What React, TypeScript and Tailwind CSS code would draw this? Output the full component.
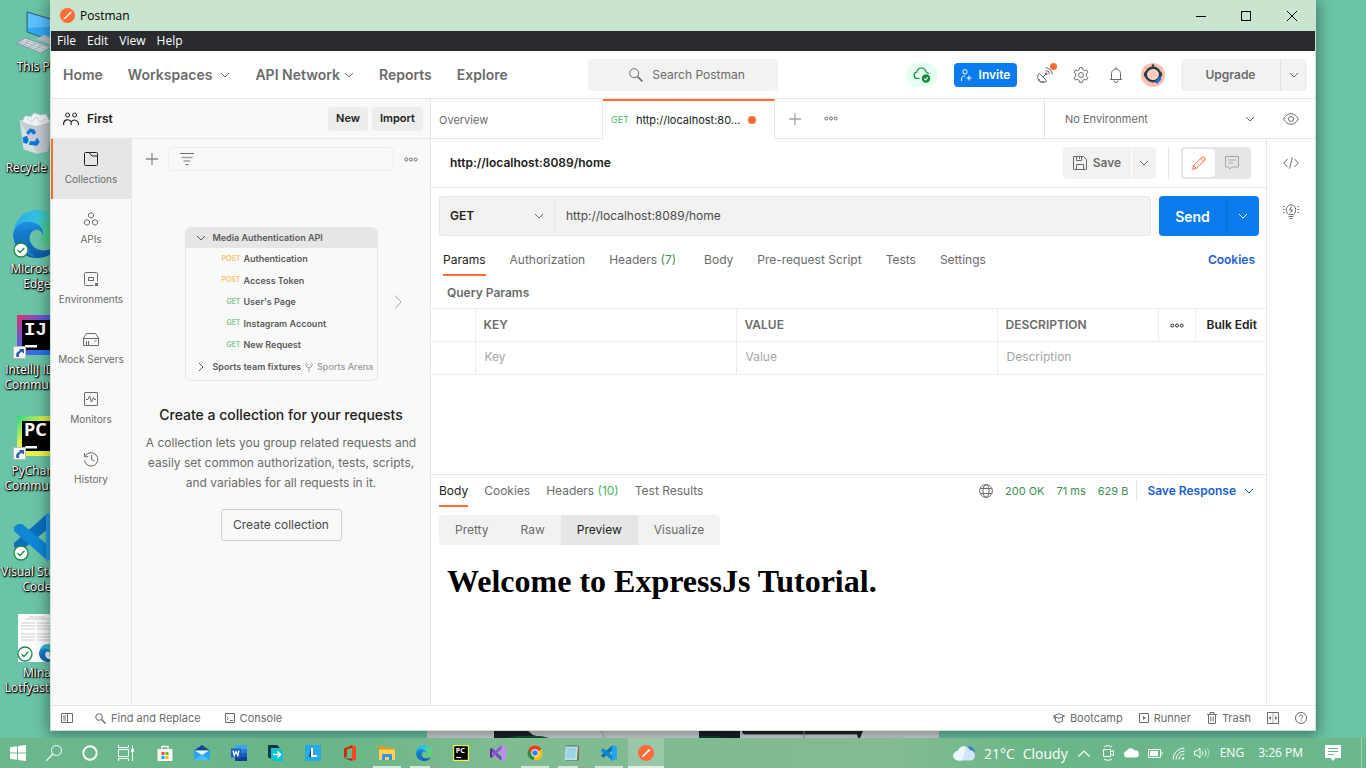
import React from "react";

type P = { className?: string };

/* ---------- line icons ---------- */

function Svg({
  w,
  h,
  className = "",
  children,
}: {
  w: number;
  h: number;
  className?: string;
  children: React.ReactNode;
}) {
  return (
    <svg
      width={w}
      height={h}
      viewBox={`0 0 ${w} ${h}`}
      fill="none"
      stroke="currentColor"
      className={`shrink-0 ${className}`}
      aria-hidden="true"
    >
      {children}
    </svg>
  );
}

const Chevron = ({ className }: P) => (
  <Svg w={10} h={6} className={className}>
    <path d="M1 1l4 4 4-4" />
  </Svg>
);
const Dots = ({ className }: P) => (
  <Svg w={14} h={5} className={className}>
    <circle cx="2.3" cy="2.5" r="1.5" />
    <circle cx="7" cy="2.5" r="1.5" />
    <circle cx="11.7" cy="2.5" r="1.5" />
  </Svg>
);
const Plus = ({ className }: P) => (
  <Svg w={12} h={12} className={className}>
    <path d="M6 0v12M0 6h12" strokeWidth="1.3" />
  </Svg>
);
const SearchIcon = ({ className }: P) => (
  <Svg w={14} h={14} className={className}>
    <circle cx="5.2" cy="5.2" r="4.5" />
    <path d="M8.4 8.4l5 5" strokeWidth="1.6" />
  </Svg>
);
const SmallSearch = ({ className }: P) => (
  <Svg w={11} h={11} className={className}>
    <circle cx="4" cy="4" r="3.3" />
    <path d="M6.5 6.5l4 4" strokeWidth="1.5" />
  </Svg>
);

function PostmanLogo({ size }: { size: number }) {
  return (
    <svg width={size} height={size} viewBox="0 0 16 16" className="shrink-0" aria-hidden="true">
      <circle cx="8" cy="8" r="8" fill="#ff6c37" />
      <path d="M3.4 12.600l1.600-2.600 4.600-4.300 1 1-4.400 4.500z" fill="#fff" />
      <path d="M9.300 5.600l1.900-1.800 1.300 1.300-1.800 1.900z" fill="#fff" />
    </svg>
  );
}

const People = () => (
  <Svg w={16} h={13}>
    <circle cx="4.6" cy="3" r="2" />
    <circle cx="11.6" cy="3" r="2" />
    <path d="M.6 13v-1.200a4 4 0 0 1 7.600-1.800M15.500 13v-1.200a4 4 0 0 0-7.400-1.800M8.100 10v3" strokeWidth="1.1" />
  </Svg>
);
const Filter = () => (
  <Svg w={14} h={12}>
    <path d="M0 .5h14M5.500 11.500h3" />
    <path d="M1.500 4.500h11M3.500 8h7" strokeWidth="1.600" opacity=".6" />
  </Svg>
);

const CollectionsIcon = () => (
  <Svg w={14} h={14}>
    <path d="M1.500.5h11a1 1 0 0 1 1 1v11a1 1 0 0 1-1 1h-11a1 1 0 0 1-1-1v-11a1 1 0 0 1 1-1zM5 .5l3 3.500h5.500" />
  </Svg>
);
const ApisIcon = () => (
  <Svg w={16} h={14}>
    <path d="M8 .6l2.500 1.400v2.700L8 6.100 5.500 4.700V2zM4 7.600l2.500 1.400v2.700L4 13.200l-2.600-1.500V9zM12 7.600l2.500 1.400v2.700L12 13.200l-2.600-1.500V9z" />
  </Svg>
);
const EnvIcon = () => (
  <Svg w={14} h={14}>
    <path d="M9.500 13.500h-8a1 1 0 0 1-1-1v-11a1 1 0 0 1 1-1h11a1 1 0 0 1 1 1v8" />
    <rect x="4.500" y="5.500" width="5" height="3" />
    <rect x="11" y="11" width="3" height="3" fill="currentColor" stroke="none" />
  </Svg>
);
const MockIcon = () => (
  <Svg w={16} h={13}>
    <path d="M.5 12.500v-7.500L3.500.5h9l3 4.500v7.500zM.5 5.500h15M3.500 8v4.500M5.500 8v4.500M11.500 8h2" />
  </Svg>
);
const MonitorIcon = () => (
  <Svg w={14} h={14}>
    <rect x=".5" y=".5" width="13" height="13" rx=".5" />
    <path d="M2 7.500h2L5.500 4l2 6 2-4.500 1 2H12" />
  </Svg>
);
const HistoryIcon = () => (
  <Svg w={16} h={16}>
    <path d="M2.200 5.200A6.700 6.700 0 1 1 1.500 9.500M1.500 2v3.700H5.200M8.500 4v4.500l3 1.500" />
  </Svg>
);

const CloudOk = () => (
  <Svg w={18} h={16} className="text-[#0f8a3c]">
    <path d="M6.500 11.500H4a3.300 3.300 0 0 1-.3-6.500A4.700 4.700 0 0 1 13 5a3 3 0 0 1 2.500 2" strokeWidth="1.200" />
    <circle cx="13" cy="11.500" r="4.200" fill="#0f8a3c" stroke="none" />
    <path d="M11.200 11.600l1.300 1.300 2.300-2.500" stroke="#fff" strokeWidth="1.100" />
  </Svg>
);
const InviteIcon = () => (
  <Svg w={11} h={12}>
    <circle cx="4" cy="2.800" r="2.200" />
    <path d="M.6 12V9.800C.6 8 2 6.900 4 6.900M8 6.500v5M5.500 9H10.500" />
  </Svg>
);
const Satellite = () => (
  <Svg w={16} h={16}>
    <path d="M2.200 6.200a5.200 5.200 0 0 0 7.600 7.600zM6 10l3-3M1 13.500l2-1.200M2.500 15l5-.2" />
    <circle cx="9.200" cy="6.800" r=".9" fill="currentColor" />
    <path d="M8.500 3.500a4 4 0 0 1 4 4M8.500.8a6.600 6.600 0 0 1 6.700 6.700" />
  </Svg>
);
const Gear = () => (
  <Svg w={16} h={16}>
    <path d="M6.600.7h2.800l.5 2.100 1.500.9 2.100-.7 1.400 2.400-1.600 1.500v2.200l1.600 1.500-1.400 2.400-2.100-.7-1.500.9-.5 2.100H6.600l-.5-2.100-1.500-.9-2.100.7-1.400-2.400 1.600-1.500V6.900L1.100 5.400 2.500 3l2.100.7 1.500-.9z" strokeLinejoin="round" />
    <circle cx="8" cy="8" r="2.500" />
  </Svg>
);
const Bell = () => (
  <Svg w={14} h={16}>
    <path d="M1 12.500h12M2.500 12.500V6.500a4.500 4.500 0 0 1 9 0v6M7 0v2M5 13.500a2 2 0 0 0 4 0" />
  </Svg>
);
const Avatar = () => (
  <svg width="24" height="24" viewBox="0 0 24 24" className="shrink-0" aria-hidden="true">
    <circle cx="12" cy="12" r="12" fill="#ffbfb0" />
    <path d="M12 3v18M4 5l16 14" stroke="#f79c8a" strokeWidth="1" />
    <ellipse cx="12" cy="11.500" rx="7" ry="6.600" fill="#ffc9bd" stroke="#2c3e46" strokeWidth="2.600" />
    <ellipse cx="12" cy="11.500" rx="5.300" ry="4.900" fill="none" stroke="#fff0ec" strokeWidth=".8" />
    <circle cx="12" cy="2.500" r="1.300" fill="#2c3e46" />
    <path d="M12 3v2" stroke="#2c3e46" />
    <path d="M3.800 9.500v4M20.200 9.500v4" stroke="#2c3e46" strokeWidth="1.800" />
    <path d="M15 20l4.500-5" stroke="#1f6fe0" strokeWidth="3" />
  </svg>
);
const Eye = () => (
  <Svg w={16} h={12}>
    <path d="M.6 6C2.500 2.600 5 .7 8 .7S13.500 2.600 15.400 6C13.500 9.400 11 11.300 8 11.300S2.500 9.400.6 6z" />
    <circle cx="8" cy="6" r="2.500" />
  </Svg>
);
const SaveIcon = () => (
  <Svg w={14} h={14}>
    <path d="M.5 1a.5.5 0 0 1 .5-.5h9.500l3 3V13a.5.5 0 0 1-.5.5H1a.5.5 0 0 1-.5-.5zM3.500.5v4h5v-4M3.500 13.500v-5h7v5M6.500 1v2" />
  </Svg>
);
const Pencil = () => (
  <Svg w={14} h={14}>
    <path d="M.7 13.300l.9-3.700L10 1.200a1.400 1.400 0 0 1 2 0l.8.8a1.400 1.400 0 0 1 0 2L4.400 12.400zM8.800 2.400l2.800 2.800M1.600 9.600l2.800 2.800" />
  </Svg>
);
const CommentIcon = () => (
  <Svg w={14} h={14}>
    <path d="M.5.5h13v10.500H6.500L5 13l-1.500-2h-3zM3 4h8M3 7h5" />
  </Svg>
);
const CodeIcon = () => (
  <Svg w={16} h={12}>
    <path d="M4.500 2L.8 6l3.700 4M11.500 2l3.700 4-3.700 4M9.500.3l-3 11.400" />
  </Svg>
);
const Bulb = () => (
  <Svg w={16} h={16}>
    <path d="M5.500 11.500C4 10.300 3.300 8.800 3.300 6.500a4.700 4.700 0 1 1 9.400 0c0 2.300-.7 3.800-2.200 5zM5.500 13.500h5M6.500 15.500h3M8.700 3.500L6.500 7h3L7.500 9.800" />
    <path d="M0 3.500h1.500M0 6.500h1.500M0 9.500h1.500M14.500 3.500H16M14.500 6.500H16M14.500 9.500H16" />
  </Svg>
);
const GlobeIcon = () => (
  <Svg w={14} h={14}>
    <circle cx="7" cy="7" r="6.400" />
    <ellipse cx="7" cy="7" rx="3" ry="6.400" />
    <path d="M1.300 4.500h11.400M1.300 9.500h11.400" />
  </Svg>
);
const PanelIcon = () => (
  <Svg w={12} h={10}>
    <path d="M.5.5h11v9H.5zM6.500.5v9M2 3h3M2 5h3M2 7h3" />
  </Svg>
);
const ConsoleIcon = () => (
  <Svg w={10} h={10}>
    <path d="M.5.5h9v9h-9zM2 4l1.500 1.500L2 7M5 7.500h3" />
  </Svg>
);
const BootcampIcon = () => (
  <Svg w={12} h={10}>
    <path d="M.5 3L6 .7 11.500 3 6 5.400zM2.500 4v4c2 1.800 5 1.800 7 0V4M1 3.500V6" />
  </Svg>
);
const RunnerIcon = () => (
  <Svg w={10} h={10}>
    <path d="M.5.5h9v9h-9z" />
    <path d="M4 3l3 2-3 2z" fill="currentColor" stroke="none" />
  </Svg>
);
const TrashIcon = () => (
  <Svg w={10} h={12}>
    <path d="M0 2.500h10M3 2V.5h4V2M1.500 2.500v9h7v-9M3.800 4.500v5M6.200 4.500v5" />
  </Svg>
);
const PanesIcon = () => (
  <Svg w={12} h={12}>
    <path d="M.5.500h11v11H.5z" />
    <path d="M6 .5v11" opacity=".6" />
    <path d="M1.500 6L4 4v4zM10.500 6L8 4v4z" fill="currentColor" stroke="none" />
  </Svg>
);
const HelpIcon = () => (
  <Svg w={12} h={12}>
    <circle cx="6" cy="6" r="5.500" />
    <path d="M4.300 4.700a1.700 1.700 0 1 1 2.500 1.500c-.6.300-.8.600-.8 1.200M6 8.300v1" />
  </Svg>
);
const ForkIcon = () => (
  <Svg w={8} h={9} className="text-[#a6a6a6]">
    <circle cx="1.500" cy="1.500" r="1" />
    <circle cx="6.500" cy="1.500" r="1" />
    <path d="M1.500 2.500V4c0 1 5 1 5 0V2.500M4 4.800V9" />
  </Svg>
);

/* ---------- application logos ---------- */

function EdgeLogo({ size }: { size: number }) {
  return (
    <svg width={size} height={size} viewBox="0 0 48 48" className="shrink-0" aria-hidden="true">
      <defs>
        <linearGradient id="edgeTop" x1="0" y1="0" x2="1" y2=".3">
          <stop offset="0" stopColor="#2aa5e8" />
          <stop offset=".5" stopColor="#34c3e0" />
          <stop offset="1" stopColor="#5fd86a" />
        </linearGradient>
        <linearGradient id="edgeLow" x1="0" y1="0" x2="0" y2="1">
          <stop offset="0" stopColor="#1b8fe0" />
          <stop offset="1" stopColor="#0c59a4" />
        </linearGradient>
      </defs>
      <path d="M1 22C2 9 12 0 24 0c14 0 24 10 24 21 0 8-6 13-13 13-6 0-8-3-7-5 3-3 1-13-9-13C10 16 2 19 1 22z" fill="url(#edgeTop)" />
      <path d="M0 24C2 14 11 11 18 12c8 1 13 7 12 13-1-4-5-6-8-5-6 2-7 9-3 15 5 7 17 7 26 1-4 8-12 12-21 12C10 48 0 37 0 24z" fill="url(#edgeLow)" />
      <path d="M20 20c-8 4-9 17 3 27-11-1-19-12-13-23 3-5 7-6 10-4z" fill="#1578c8" />
    </svg>
  );
}

function VsCodeLogo({ size }: { size: number }) {
  return (
    <svg width={size} height={size} viewBox="0 0 48 48" className="shrink-0" aria-hidden="true">
      <path d="M35 0L1 30v4l4 3 4 0L35 16z" fill="#0a70b8" />
      <path d="M35 48L1 18v-4l4-3h4l26 21z" fill="#0e86d4" />
      <path d="M35 0l13 6v36l-13 6-2-3V3z" fill="#27a1ee" />
    </svg>
  );
}

function JetBrainsLogo({ size, text, kind }: { size: number; text: string; kind: "ij" | "pc" | "task" }) {
  const id = `jb-${kind}`;
  return (
    <svg width={size} height={size} viewBox="0 0 40 40" className="shrink-0" aria-hidden="true">
      <defs>
        <linearGradient id={id} x1="0" y1="0" x2="1" y2="1">
          <stop offset="0" stopColor={kind === "ij" ? "#e0316c" : kind === "pc" ? "#21d789" : "#fcf84a"} />
          <stop offset=".35" stopColor={kind === "ij" ? "#6b57d8" : "#d9f04f"} />
          <stop offset="1" stopColor={kind === "ij" ? "#087cfa" : "#fcf84a"} />
        </linearGradient>
      </defs>
      <rect width="40" height="40" fill={`url(#${id})`} />
      <rect x={kind === "task" ? 3 : 5} y={kind === "task" ? 3 : 5} width={kind === "task" ? 34 : 35} height={kind === "task" ? 34 : 30} fill="#000" />
      <text x="7" y="20" fontFamily={kind === "ij" ? "Liberation Mono, monospace" : "Noto Sans, sans-serif"} fontWeight="700" fontSize={kind === "ij" ? 19 : 18} fill="#fff">
        {text}
      </text>
      <rect x="8" y="30" width="12" height="2.500" fill="#fff" />
    </svg>
  );
}

const OkBadge = () => (
  <svg width="16" height="16" viewBox="0 0 16 16" className="absolute bottom-0 left-0" aria-hidden="true">
    <circle cx="8" cy="8" r="7" fill="#fff" stroke="#1f8a4c" strokeWidth="1.300" />
    <path d="M4.700 8.200l2.300 2.200 4.300-4.300" fill="none" stroke="#1f8a4c" strokeWidth="1.400" />
  </svg>
);
const ShortcutBadge = () => (
  <svg width="13" height="13" viewBox="0 0 13 13" className="absolute bottom-0 left-0" aria-hidden="true">
    <rect x=".5" y=".5" width="12" height="12" fill="#f4f6f8" stroke="#b7bcc2" />
    <path d="M3.500 11C2.500 8 4 5.500 6.500 5V3H11v4.500L9 6C6.500 6.500 5.500 8 6 11z" fill="#2c5fa8" />
  </svg>
);

const ThisPcArt = () => (
  <svg width="42" height="48" viewBox="0 0 42 48" aria-hidden="true">
    <path d="M11 4l31 9v22L11 24z" fill="#34a8f2" stroke="#3d5a70" strokeWidth="1" />
    <path d="M12 5l30 9v4L12 20z" fill="#5cc1ff" />
    <path d="M20 31l8-4 14 5v7z" fill="#b6c2cc" />
    <path d="M0 35l9-5 26 9-10 6z" fill="#d5dce2" stroke="#7f8b95" strokeWidth=".8" />
    <path d="M3 35l24 8M6 33.500l24 8M9 32l24 8M8 31l-6 5M14 33l-8 5M20 35l-8 5M26 37l-8 5" stroke="#8e99a3" strokeWidth=".6" />
  </svg>
);
const BinArt = () => (
  <svg width="38" height="48" viewBox="0 0 42 48" aria-hidden="true">
    <path d="M2 10h36l-5 34-12 3-15-5z" fill="#d9e0e4" />
    <path d="M2 10l18 5 18-5-5 34-12 3z" fill="#c3ccd2" />
    <path d="M4 12L8 5l6 1 4-4 7 2 6-1 3 6 3 3-17 5z" fill="#f1f4f6" stroke="#b8c2c8" strokeWidth=".8" />
    <path d="M10 8l5 4 5-6 5 6 6-4" stroke="#b8c2c8" strokeWidth=".8" fill="none" />
    <path d="M9 24l4-5 5 1 2 4-3 2-3-3-2 3zM5 29l5-2 2 5-2 4-4-1zM12 37l1-4 6 0 2-4 3 5-3 4z" fill="#0a76d6" />
  </svg>
);
const PdfArt = () => (
  <svg width="40" height="48" viewBox="0 0 40 48" aria-hidden="true">
    <rect x="1" width="39" height="48" fill="#fff" />
    <path d="M12 3h16M8 5h24M4 9h14M4 12h14M4 15h13M20 9h16M20 12h14M20 15h16M4 20h14M4 23h14M4 26h13M20 20h14M20 23h14M20 26h16" stroke="#c9cccf" strokeWidth="1.200" />
  </svg>
);

function DesktopItem({ label, badge, children }: { label: string; badge?: React.ReactNode; children: React.ReactNode }) {
  return (
    <li className="flex h-[101px] flex-col items-center">
      <div className="relative flex h-12 w-12 items-end justify-center">
        {children}
        {badge}
      </div>
      <span className="mt-[3px] w-[74px] text-center font-['Open_Sans',sans-serif] text-[12px] leading-[15px] text-white [text-shadow:1px_1px_1px_#000,0_1px_2px_#000,1px_0_1px_#000]">
        {label}
      </span>
    </li>
  );
}

function Desktop() {
  return (
    <div className="h-full w-[51px] overflow-hidden">
      <ul className="flex w-[74px] flex-col pt-2" aria-label="Desktop">
        <DesktopItem label="This PC"><ThisPcArt /></DesktopItem>
        <DesktopItem label="Recycle Bin"><BinArt /></DesktopItem>
        <DesktopItem label="Microsoft Edge" badge={<OkBadge />}><EdgeLogo size={48} /></DesktopItem>
        <DesktopItem label="IntelliJ IDEA Community" badge={<ShortcutBadge />}>
          <span className="mb-1"><JetBrainsLogo size={40} text="IJ" kind="ij" /></span>
        </DesktopItem>
        <DesktopItem label="PyCharm Community" badge={<ShortcutBadge />}>
          <span className="mb-1"><JetBrainsLogo size={40} text="PC" kind="pc" /></span>
        </DesktopItem>
        <DesktopItem label="Visual Studio Code" badge={<OkBadge />}><VsCodeLogo size={48} /></DesktopItem>
        <DesktopItem
          label="Mina Lotfyastaf…"
          badge={
            <>
              <span className="absolute bottom-0 left-1 h-4 w-4"><OkBadge /></span>
              <span className="absolute bottom-0 right-1"><EdgeLogo size={18} /></span>
            </>
          }
        >
          <PdfArt />
        </DesktopItem>
      </ul>
    </div>
  );
}

/* Strip of the wallpaper photo that shows between the window and the taskbar */
function WallpaperStrip() {
  return (
    <svg className="absolute bottom-0 left-[427px]" width="512" height="8" viewBox="0 0 512 8" aria-hidden="true">
      <rect width="512" height="8" fill="#d3d4d8" />
      <path d="M67 0h33l6 5 12 3H67z" fill="#1d2129" />
      <path d="M78 8l12-2h24l8 2z" fill="#16553a" />
      <path d="M174 0l4 8" stroke="#a9a9ad" />
      <path d="M272 0h41v8h-41z" fill="#1b1f27" />
      <path d="M272 6h22v2h-22z" fill="#123f30" />
      <path d="M315 1h121l-3 7h-2l-1-4-114 0z" fill="#23252b" />
      <path d="M317 4h113v1H317z" fill="#8b8c90" />
      <path d="M377 0v8" stroke="#8b8c90" />
    </svg>
  );
}

/* ---------- Postman window ---------- */

function TitleBar() {
  return (
    <div className="flex h-[31px] shrink-0 items-center bg-[#cae5cf] pl-[9px] font-['Open_Sans',sans-serif] text-[12px] text-black">
      <PostmanLogo size={15} />
      <span className="ml-[5px] flex-1">Postman</span>
      <button aria-label="Minimize" className="flex h-full w-[45px] items-center justify-center">
        <Svg w={10} h={10}><path d="M0 5.500h10" /></Svg>
      </button>
      <button aria-label="Maximize" className="flex h-full w-[46px] items-center justify-center">
        <Svg w={10} h={10}><path d="M.5.5h9v9h-9z" /></Svg>
      </button>
      <button aria-label="Close" className="flex h-full w-[46px] items-center justify-center">
        <Svg w={10} h={10}><path d="M0 0l10 10M10 0L0 10" /></Svg>
      </button>
    </div>
  );
}

function MenuBar() {
  return (
    <nav aria-label="Menu" className="flex h-5 shrink-0 items-center gap-[11px] bg-[#2a2b2e] pl-[6px] font-['Open_Sans',sans-serif] text-[12px] leading-none text-white">
      {["File", "Edit", "View", "Help"].map((m) => (
        <button key={m}>{m}</button>
      ))}
    </nav>
  );
}

function Header() {
  return (
    <header className="grid h-12 shrink-0 grid-cols-[1fr_auto_1fr] items-center border-b border-[#e6e6e6] bg-white text-[#6b6b6b]">
      <nav aria-label="Main" className="flex items-center gap-[25px] pl-3 text-[14px] font-semibold">
        <a href="#home">Home</a>
        <button className="flex items-center gap-2">Workspaces <Chevron /></button>
        <button className="flex items-center gap-1">API Network <Chevron /></button>
        <a href="#reports">Reports</a>
        <a href="#explore">Explore</a>
      </nav>
      <button className="flex h-8 w-[190px] items-center justify-center gap-[9px] rounded bg-[#f2f2f2] pl-2 text-[12px]">
        <SearchIcon /> Search Postman
      </button>
      <div className="flex items-center justify-end pr-2">
        <span className="flex h-6 w-8 items-center justify-center rounded-full bg-[#e5fff1]"><CloudOk /></span>
        <button className="ml-4 flex h-6 w-[63px] items-center justify-center gap-[7px] rounded bg-[#097bed] text-[12px] font-semibold text-white">
          <InviteIcon /> Invite
        </button>
        <div className="ml-5 flex items-center gap-5">
          <button aria-label="Capture requests" className="relative">
            <Satellite />
            <span className="absolute -right-1 -top-1 h-[7px] w-[7px] rounded-full bg-[#ff6c37]" />
          </button>
          <button aria-label="Settings"><Gear /></button>
          <button aria-label="Notifications"><Bell /></button>
        </div>
        <button aria-label="Account" className="ml-[18px]"><Avatar /></button>
        <div className="ml-4 flex h-8 rounded bg-[#f2f2f2]">
          <button className="w-[99px] text-[12px] font-semibold">Upgrade</button>
          <button aria-label="Upgrade options" className="flex w-[27px] items-center justify-center border-l border-[#e0e0e0]"><Chevron /></button>
        </div>
      </div>
    </header>
  );
}

const NAV: { label: string; icon: React.ReactNode }[] = [
  { label: "Collections", icon: <CollectionsIcon /> },
  { label: "APIs", icon: <ApisIcon /> },
  { label: "Environments", icon: <EnvIcon /> },
  { label: "Mock Servers", icon: <MockIcon /> },
  { label: "Monitors", icon: <MonitorIcon /> },
  { label: "History", icon: <HistoryIcon /> },
];

const REQUESTS: [string, string][] = [
  ["POST", "Authentication"],
  ["POST", "Access Token"],
  ["GET", "User's Page"],
  ["GET", "Instagram Account"],
  ["GET", "New Request"],
];

function SampleCard() {
  return (
    <div className="h-[154px] w-[193px] overflow-hidden rounded-md border border-[#e6e6e6] text-[9px] font-semibold text-[#5a5a5a]">
      <div className="flex h-5 items-center bg-[#e6e6e6] pl-[10px]">
        <Chevron /> <span className="ml-[7px]">Media Authentication API</span>
      </div>
      <ul className="grid h-[108px] grid-rows-5">
        {REQUESTS.map(([m, n]) => (
          <li key={n} className="flex items-center gap-[3px]">
            <span className={m === "POST" ? "w-[55px] text-right text-[7px] text-[#f5c26b]" : "w-[55px] text-right text-[7px] text-[#7cc78d]"}>{m}</span>
            {n}
          </li>
        ))}
      </ul>
      <div className="flex h-[22px] items-center whitespace-nowrap pl-[10px]">
        <Chevron className="-rotate-90" /> <span className="ml-[7px] mr-1">Sports team fixtures</span>
        <ForkIcon />
        <span className="ml-1 font-medium text-[#9a9a9a]">Sports Arena</span>
      </div>
    </div>
  );
}

function Sidebar() {
  return (
    <aside className="flex w-[379px] shrink-0 flex-col bg-[#f9f9f9]">
      <div className="flex h-10 shrink-0 items-center gap-1 border-b border-[#e6e6e6] pl-3 pr-[7px] text-[12px] font-semibold text-[#212121]">
        <People />
        <span className="ml-1 flex-1">First</span>
        <button className="h-6 w-10 rounded bg-[#ededed] text-[11px]">New</button>
        <button className="h-6 w-[51px] rounded bg-[#ededed] text-[11px]">Import</button>
      </div>
      <div className="flex min-h-0 flex-1">
        <nav aria-label="Sections" className="w-[81px] shrink-0 border-r border-[#e6e6e6] text-[10px] text-[#6b6b6b]">
          {NAV.map((n, i) => (
            <button
              key={n.label}
              className={
                i === 0
                  ? "flex h-[60px] w-full flex-col items-center border-l-2 border-[#ff6c37] bg-[#e6e6e6] pr-[2px] pt-3"
                  : "flex h-[60px] w-full flex-col items-center pt-3"
              }
            >
              <span className={i === 0 ? "flex h-4 items-center text-[#212121]" : "flex h-4 items-center"}>{n.icon}</span>
              <span className="mt-1 whitespace-nowrap leading-4">{n.label}</span>
            </button>
          ))}
        </nav>
        <section className="flex min-w-0 flex-1 flex-col">
          <div className="flex items-center gap-[10px] px-3 pt-2 text-[#6b6b6b]">
            <button aria-label="New collection" className="ml-[2px] text-[#8c8c8c]"><Plus /></button>
            <label className="flex h-6 min-w-0 flex-1 items-center rounded-sm border border-[#ededed] pl-[11px]">
              <Filter />
              <input aria-label="Filter collections" className="w-full min-w-0 bg-transparent outline-none" />
            </label>
            <button aria-label="More"><Dots /></button>
          </div>
          <div className="flex flex-col items-center pt-14">
            <div className="relative">
              <SampleCard />
              <button aria-label="Next" className="absolute -right-6 top-[68px] text-[#a6a6a6]">
                <Svg w={8} h={14}><path d="M1 .5L7 7l-6 6.500" /></Svg>
              </button>
            </div>
            <h2 className="mt-6 text-[14px] font-medium leading-5 text-[#212121]">Create a collection for your requests</h2>
            <p className="mt-2 w-[276px] text-center text-[12px] leading-5 text-[#6b6b6b]">
              A collection lets you group related requests and easily set common authorization, tests, scripts, and variables for all requests in it.
            </p>
            <button className="mt-4 h-8 w-[121px] rounded-[3px] border border-[#cfcfcf] text-[12px] text-[#4a4a4a]">Create collection</button>
          </div>
        </section>
      </div>
    </aside>
  );
}

function TabStrip() {
  return (
    <div className="flex h-10 shrink-0 text-[11px] text-[#6b6b6b]">
      <button className="w-[172px] border-b border-r border-[#e6e6e6] pl-2 pt-[3px] text-left">Overview</button>
      <button className="flex w-[172px] items-center border-r border-t-2 border-r-[#e6e6e6] border-t-[#ff6c37] pl-2 text-[#212121]">
        <span className="text-[9px] text-[#4bb466]">GET</span>
        <span className="ml-[7px]">http://localhost:80...</span>
        <span className="ml-2 h-2 w-2 rounded-full bg-[#ff6c37]" />
      </button>
      <div className="flex flex-1 items-center gap-[23px] border-b border-[#e6e6e6] pl-[14px]">
        <button aria-label="New tab" className="text-[#a6a6a6]"><Plus /></button>
        <button aria-label="Tab options"><Dots /></button>
      </div>
      <div className="flex w-[271px] items-center border-b border-l border-[#e6e6e6] pl-5 pr-4 pt-px">
        <button className="flex flex-1 items-center justify-between">No Environment <Chevron /></button>
        <button aria-label="Environment quick look" className="ml-7"><Eye /></button>
      </div>
    </div>
  );
}

function RequestPane() {
  const tabs = ["Params", "Authorization", "Headers", "Body", "Pre-request Script", "Tests", "Settings"];
  return (
    <section className="flex min-h-0 flex-1 flex-col">
      <div className="flex h-[49px] shrink-0 items-center border-b border-[#e6e6e6] pl-[19px] pr-[15px] text-[#6b6b6b]">
        <h1 className="flex-1 text-[12px] font-semibold text-[#212121]">http://localhost:8089/home</h1>
        <button className="flex h-8 w-[68px] items-center justify-center gap-[6px] rounded-l bg-[#f2f2f2] text-[12px] font-semibold"><SaveIcon /> Save</button>
        <button aria-label="Save options" className="ml-px flex h-8 w-6 items-center justify-center rounded-r bg-[#f2f2f2]"><Chevron /></button>
        <span className="ml-3 h-8 w-px bg-[#e6e6e6]" />
        <div className="ml-3 flex h-8 w-[70px] rounded bg-[#e6e6e6] p-[2px]">
          <button aria-label="Edit" className="flex w-8 items-center justify-center rounded-[3px] bg-white text-[#ff6c37]"><Pencil /></button>
          <button aria-label="Comments" className="flex flex-1 items-center justify-center text-[#a6a6a6]"><CommentIcon /></button>
        </div>
      </div>

      <form className="mt-2 flex h-10 shrink-0 px-2 pr-[7px] text-[12px]" onSubmit={(e) => e.preventDefault()}>
        <div className="flex flex-1 rounded-[3px] border border-[#e6e6e6] bg-[#f2f2f2]">
          <div className="relative flex w-[115px] items-center border-r border-[#e6e6e6]">
            <select aria-label="Method" className="h-full w-full appearance-none bg-transparent pl-[10px] font-semibold text-[#212121] outline-none">
              <option>GET</option>
            </select>
            <Chevron className="pointer-events-none absolute right-[10px] text-[#6b6b6b]" />
          </div>
          <input aria-label="Request URL" defaultValue="http://localhost:8089/home" className="min-w-0 flex-1 bg-transparent pl-[11px] text-[#4a4a4a] outline-none" />
        </div>
        <button className="ml-2 w-[67px] rounded-l bg-[#097bed] text-[14px] font-semibold text-white">Send</button>
        <button type="button" aria-label="Send options" className="flex w-[33px] items-center justify-center rounded-r border-l border-[#0a6fd4] bg-[#097bed] text-white"><Chevron /></button>
      </form>

      <div className="flex h-10 shrink-0 items-stretch pl-3 pr-[11px] pt-[9px] text-[12px] text-[#6b6b6b]">
        <div className="flex flex-1 gap-6">
          {tabs.map((t, i) => (
            <button key={t} className={i === 0 ? "border-b-2 border-[#ff6c37] text-[#212121]" : "border-b-2 border-transparent"}>
              {t}
              {t === "Headers" && <span className="pr-1 text-[#3f8f55]"> (7)</span>}
            </button>
          ))}
        </div>
        <button className="pb-[2px] font-semibold text-[#1a5fd0]">Cookies</button>
      </div>

      <h2 className="flex h-8 shrink-0 items-center pl-4 pt-[2px] text-[12px] font-semibold text-[#6b6b6b]">Query Params</h2>

      <table className="w-full table-fixed border-collapse border-y border-[#ededed] text-left text-[12px] text-[#6b6b6b]">
        <colgroup>
          <col className="w-[44px]" />
          <col className="w-[261px]" />
          <col className="w-[261px]" />
          <col />
          <col className="w-[37px]" />
          <col className="w-[71px]" />
        </colgroup>
        <thead>
          <tr className="h-[33px] border-b border-[#ededed]">
            <th className="border-r border-[#ededed]" />
            <th className="border-r border-[#ededed] pl-2 font-semibold">KEY</th>
            <th className="border-r border-[#ededed] pl-2 font-semibold">VALUE</th>
            <th className="border-r border-[#ededed] pl-2 font-semibold">DESCRIPTION</th>
            <th className="border-r border-[#ededed]">
              <button aria-label="Columns" className="flex w-full justify-center text-[#212121]"><Dots /></button>
            </th>
            <th className="pl-[2px] text-center font-semibold text-[#212121]"><button>Bulk Edit</button></th>
          </tr>
        </thead>
        <tbody>
          <tr className="h-[33px]">
            <td className="border-r border-[#ededed]" />
            <td className="border-r border-[#ededed] pb-[2px] pl-[9px]"><input aria-label="Key" placeholder="Key" className="w-full outline-none placeholder:text-[#a6a6a6]" /></td>
            <td className="border-r border-[#ededed] pb-[2px] pl-[9px]"><input aria-label="Value" placeholder="Value" className="w-full outline-none placeholder:text-[#a6a6a6]" /></td>
            <td colSpan={3} className="pb-[2px] pl-[9px]"><input aria-label="Description" placeholder="Description" className="w-full outline-none placeholder:text-[#a6a6a6]" /></td>
          </tr>
        </tbody>
      </table>
    </section>
  );
}

function ResponsePane() {
  return (
    <section className="h-[231px] shrink-0 border-t border-[#e6e6e6] text-[12px] text-[#6b6b6b]">
      <div className="flex h-8 pl-2 pr-3">
        <div className="flex flex-1 gap-4 pt-[2px]">
          <button className="border-b-2 border-[#ff6c37] text-[#212121]">Body</button>
          <button className="border-b-2 border-transparent">Cookies</button>
          <button className="border-b-2 border-transparent">Headers <span className="text-[#4bb466]">(10)</span></button>
          <button className="border-b-2 border-transparent">Test Results</button>
        </div>
        <div className="flex items-center gap-3 text-[11px] text-[#3f8f55]">
          <span className="text-[#6b6b6b]"><GlobeIcon /></span>
          <span>200 OK</span>
          <span>71 ms</span>
          <span>629 B</span>
        </div>
        <span className="ml-2 mt-[6px] h-5 w-px bg-[#e6e6e6]" />
        <button className="ml-[10px] flex items-center gap-2 font-semibold text-[#1a5fd0]">Save Response <Chevron /></button>
      </div>
      <div className="ml-2 mt-2 inline-flex h-[30px] overflow-hidden rounded bg-[#f2f2f2]">
        <button className="px-4">Pretty</button>
        <button className="px-4">Raw</button>
        <button className="bg-[#e6e6e6] px-4 text-[#212121]">Preview</button>
        <button className="px-4">Visualize</button>
      </div>
      <div className="pl-4 pt-[18px] font-['Liberation_Serif',serif] text-[32px] font-bold leading-[37px] text-black">
        Welcome to ExpressJs Tutorial.
      </div>
    </section>
  );
}

function StatusBar() {
  return (
    <footer className="flex h-[25px] shrink-0 items-center border-t border-[#e6e6e6] bg-white px-[10px] pr-2 text-[11px] text-[#6b6b6b]">
      <button aria-label="Toggle sidebar"><PanelIcon /></button>
      <button className="ml-[22px] flex items-center gap-[5px]"><SmallSearch /> Find and Replace</button>
      <button className="ml-6 flex items-center gap-[5px]"><ConsoleIcon /> Console</button>
      <div className="flex-1" />
      <div className="flex items-center gap-4">
        <button className="flex items-center gap-[5px]"><BootcampIcon /> Bootcamp</button>
        <button className="flex items-center gap-[5px]"><RunnerIcon /> Runner</button>
        <button className="flex items-center gap-[5px]"><TrashIcon /> Trash</button>
        <button aria-label="Two panes"><PanesIcon /></button>
        <button aria-label="Help"><HelpIcon /></button>
      </div>
    </footer>
  );
}

function PostmanWindow() {
  return (
    <main className="absolute bottom-[7px] left-[50px] right-[50px] top-0 flex flex-col border-x border-b border-[#cae5cf] bg-white font-['Inter',sans-serif] shadow-[0_2px_14px_2px_rgba(0,0,0,0.4)]">
      <TitleBar />
      <MenuBar />
      <Header />
      <div className="flex min-h-0 flex-1">
        <Sidebar />
        <div className="flex min-w-0 flex-1 flex-col border-l border-[#e6e6e6]">
          <TabStrip />
          <div className="flex min-h-0 flex-1">
            <div className="flex min-w-0 flex-1 flex-col">
              <RequestPane />
              <ResponsePane />
            </div>
            <div className="flex w-[49px] shrink-0 flex-col items-center gap-[34px] border-l border-[#e6e6e6] pt-[18px] text-[#6b6b6b]">
              <button aria-label="Code"><CodeIcon /></button>
              <button aria-label="Info"><Bulb /></button>
            </div>
          </div>
        </div>
      </div>
      <StatusBar />
    </main>
  );
}

/* ---------- taskbar ---------- */

function App16({ children }: { children: React.ReactNode }) {
  return <svg width="16" height="16" viewBox="0 0 16 16" fill="none" aria-hidden="true">{children}</svg>;
}

const APPS: { name: string; state?: "open" | "multi" | "active"; icon: React.ReactNode }[] = [
  { name: "Store", icon: <App16><path d="M5 4V1.500h6V4" stroke="#fff" strokeWidth="1.300" /><path d="M.5 4h15v12H.5z" fill="#f5f5f5" /><path d="M4.500 7h3v3h-3z" fill="#f25022" /><path d="M8.500 7h3v3h-3z" fill="#7fba00" /><path d="M4.500 11h3v3h-3z" fill="#00a4ef" /><path d="M8.500 11h3v3h-3z" fill="#ffb900" /></App16> },
  { name: "Mail", icon: <App16><path d="M0 5.500L8 0l8 5.500V8H0z" fill="#0a4a8f" /><path d="M0 5.500h16V15H0z" fill="#2aa4ee" /><path d="M1 5.500h14L8 10z" fill="#f4f8fb" /><path d="M0 15l8-5.500L16 15z" fill="#49bdf5" /></App16> },
  { name: "Word", icon: <App16><path d="M4 0h12v16H4z" fill="#2b7cd3" /><path d="M4 0h12v4H4z" fill="#41a5ee" /><path d="M4 8h12v4H4z" fill="#185abd" /><path d="M4 12h12v4H4z" fill="#103f91" /><path d="M0 3.500h10v9H0z" fill="#185abd" /><path d="M2 5.500l1.200 5L5 6.500l1.800 4 1.200-5" stroke="#fff" strokeWidth="1.300" /></App16> },
  { name: "Send files", icon: <App16><path d="M0 0h9l3 3H3v11L0 12z" fill="#04384a" /><path d="M3 4h9l3 3v9H6l-3-3z" fill="#00c4d8" /><path d="M5 9.500h7M9.500 6.500l3 3-3 3" stroke="#fff" strokeWidth="1.600" /></App16> },
  { name: "Lightshot", icon: <App16><path d="M0 0h16v16H0z" fill="#27aae1" /><path d="M6 3v9h6V10H8V3z" fill="#fff" /><path d="M4 12l2-9v9z" fill="#15445f" /></App16> },
  { name: "Office", icon: <App16><path d="M2 3.500L10 0v3L5 4.500v7L2 13z" fill="#c8300c" /><path d="M2 13l8 .8V16z" fill="#a8240a" /><path d="M10 0l4 1.500v13L10 16z" fill="#f04a1c" /></App16> },
  { name: "File Explorer", state: "open", icon: <App16><path d="M0 1h6l1.500 2H16v5H0z" fill="#e29a17" /><path d="M0 4.500h16V15H0z" fill="#fdd15a" /><path d="M3 15V9h10v6h-3v-3H6v3z" fill="#3f8fe0" /></App16> },
  { name: "Edge", state: "multi", icon: <EdgeLogo size={16} /> },
  { name: "PyCharm", icon: <JetBrainsLogo size={16} text="PC" kind="task" /> },
  { name: "Visual Studio", icon: <App16><path d="M11.500 0L16 2v12l-4.500 2V0z" fill="#c08cf5" /><path d="M0 4l2-1 9.500 9v4L0 5z" fill="#7a3fc4" /><path d="M0 12l2 1 9.500-9V0L0 11z" fill="#9454dd" /><path d="M0 4l2-1v10l-2-1z" fill="#5a2f9c" /></App16> },
  { name: "Chrome", state: "open", icon: <App16><circle cx="8" cy="8" r="7.500" fill="#fbc116" /><path d="M1.500 4.200a7.500 7.500 0 0 1 13 0L8 5z" fill="#e33b2e" /><path d="M1.500 4.200h13L8 8.500 5 10z" fill="#e33b2e" /><path d="M1.500 4.200L5 10l3 1-1.500 4.300A7.500 7.500 0 0 1 1.500 4.200z" fill="#229342" /><circle cx="8" cy="8" r="3.700" fill="#fff" /><circle cx="8" cy="8" r="2.800" fill="#3e7de8" /></App16> },
  { name: "Notepad", state: "multi", icon: <App16><path d="M2 1h12.500l-1.500 14H.5z" fill="#b5e2ee" /><path d="M14 1h1v14.500H2V15h11z" fill="#7d6a4d" /><path d="M3 4h9M3 6h9M2.500 8h9M2.500 10h9M2 12h9" stroke="#6fb4ca" strokeWidth=".7" /><path d="M3 0v2M5 0v2M7 0v2M9 0v2M11 0v2M13 0v2" stroke="#5a6a70" /></App16> },
  { name: "VS Code", state: "open", icon: <VsCodeLogo size={16} /> },
  { name: "Postman", state: "active", icon: <PostmanLogo size={16} /> },
];

function Taskbar() {
  return (
    <footer className="flex h-[30px] shrink-0 items-stretch bg-[linear-gradient(90deg,#6cb78e_0%,#6ab587_25%,#80bb92_36%,#83bb93_66%,#6bb687_75%,#6cb78e_100%)] font-['Open_Sans',sans-serif] text-white">
      <button aria-label="Start" className="flex w-9 items-center justify-center">
        <App16><path d="M0 2.300l7-1v6.200H0zM8 1.100L16 0v7.500H8zM0 8.500h7v6.200l-7-1zM8 8.500h8V16l-8-1.100z" fill="#fff" /></App16>
      </button>
      <button aria-label="Search" className="flex w-9 items-center justify-center">
        <App16><circle cx="10.500" cy="5.500" r="5" stroke="#fff" /><path d="M7 9l-7 7" stroke="#fff" strokeWidth="1.200" /></App16>
      </button>
      <button aria-label="Cortana" className="flex w-9 items-center justify-center">
        <App16><circle cx="8" cy="8" r="6.700" stroke="#fff" strokeWidth="1.900" /></App16>
      </button>
      <button aria-label="Task view" className="flex w-9 items-center justify-center">
        <App16><path d="M.5 0v2.500h10V0M.5 16v-2.500h10V16M.5 4.500h10v7H.5zM14.500 0v16" stroke="#fff" /><path d="M13 4h3v3h-3z" fill="#fff" /></App16>
      </button>
      <div className="ml-[3px] flex gap-px">
        {APPS.map((a) => (
          <button
            key={a.name}
            aria-label={a.name}
            className={a.state === "active" ? "relative flex w-9 items-center justify-center bg-white/20" : "relative flex w-9 items-center justify-center"}
          >
            {a.icon}
            {a.state === "open" && <span className="absolute inset-x-1 bottom-0 h-[2px] bg-[#cfe8d8]" />}
            {a.state === "multi" && <span className="absolute inset-x-1 bottom-0 h-[2px] border-r-8 border-[#8fa798] bg-[#cfe8d8]" />}
            {a.state === "active" && <span className="absolute inset-x-0 bottom-0 h-[2px] bg-[#dcefe2]" />}
          </button>
        ))}
      </div>
      <div className="flex flex-1 items-center justify-end">
        <svg width="22" height="16" viewBox="0 0 22 16" className="mr-[9px]" aria-hidden="true">
          <path d="M14 1.500a6 6 0 0 1 7.500 7.500L17 12z" fill="#2f7fd0" />
          <path d="M5 15.500A4.600 4.600 0 0 1 5 6 6.500 6.500 0 0 1 17 5a5.300 5.300 0 0 1 .5 10.500z" fill="#cfe6fb" />
          <path d="M5 15.500A4.600 4.600 0 0 1 5 6 6.500 6.500 0 0 1 13 1.500L9 15.500z" fill="#eef7ff" />
        </svg>
        <span className="flex gap-2 text-[14px]"><span>21°C</span><span>Cloudy</span></span>
        <button aria-label="Show hidden icons" className="ml-[10px]">
          <Svg w={12} h={7}><path d="M.5 6.500L6 1l5.500 5.500" strokeWidth="1.200" /></Svg>
        </button>
        <div className="ml-3 flex items-center gap-[9px]">
          <Svg w={12} h={16}><path d="M1.500 4.500h7v7h-7zM8.500 7l3-1.500v5l-3-1.500M2 2C4 .3 8 .3 10 2M2 14c2 1.700 6 1.700 8 0" /></Svg>
          <Svg w={16} h={10}><path d="M4 9.500A3.300 3.300 0 0 1 3.500 3 4.500 4.500 0 0 1 11.500 2.500a3.500 3.500 0 0 1 1.500 7z" fill="#fff" stroke="none" /></Svg>
          <Svg w={15} h={9}><path d="M.5.5h12v8H.5zM14 3v3" /><path d="M2 2h8v5H2z" fill="#fff" stroke="none" /></Svg>
          <Svg w={13} h={13}><path d="M1 12.500A11.500 11.500 0 0 1 12.500 1M4 12.500A8.500 8.500 0 0 1 12.500 4M7 12.500a5.500 5.500 0 0 1 5.500-5.500" /><circle cx="11" cy="11.500" r="1.300" fill="#fff" stroke="none" /></Svg>
          <Svg w={16} h={12}><path d="M.5 4h2.500L6 1v10L3 8H.5zM8 4c1 1 1 3 0 4M10.500 2.500c2 2 2 5 0 7" /><path d="M13 1c2.500 3 2.500 7 0 10" opacity=".5" /></Svg>
        </div>
        <span className="ml-[10px] text-[12px]">ENG</span>
        <time className="ml-[14px] text-[12px]">3:26 PM</time>
        <button aria-label="Notifications" className="ml-[22px] mr-5">
          <svg width="16" height="16" viewBox="0 0 16 16" aria-hidden="true">
            <path d="M0 0h16v13h-5.500L8 16l-2.500-3H0z" fill="#fff" />
            <path d="M3 3.500h10M3 6.500h10M3 9.500h6" stroke="#6bb687" />
          </svg>
        </button>
        <button aria-label="Show desktop" className="h-full w-[5px] border-l border-[#9ccfae]" />
      </div>
    </footer>
  );
}

export default function App() {
  return (
    <div className="flex h-screen flex-col overflow-hidden bg-[#6bc4a8]">
      <div className="relative min-h-0 flex-1 overflow-hidden">
        <Desktop />
        <WallpaperStrip />
        <PostmanWindow />
      </div>
      <Taskbar />
    </div>
  );
}
